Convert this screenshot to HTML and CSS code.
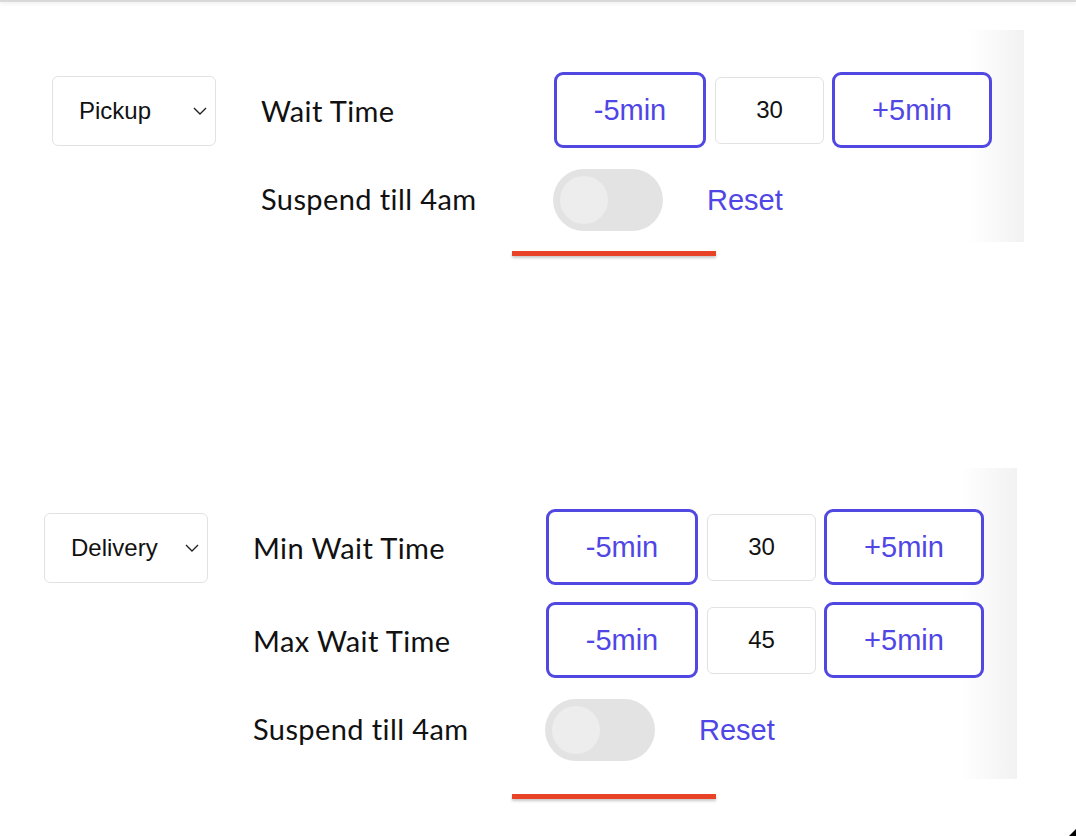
FILE: index.html
```html
<!DOCTYPE html>
<html lang="en">
<head>
<meta charset="utf-8">
<title>Wait Time Settings</title>
<link rel="stylesheet" href="styles.css">
</head>
<body>
<div class="topbar"></div>

<section class="panel panel-pickup">
  <div class="select">
    <span class="select-text">Pickup</span>
    <svg class="chev" width="14" height="8" viewBox="0 0 14 8"><polyline points="1,1 7,7 13,1" fill="none" stroke="#222" stroke-width="1.4"/></svg>
  </div>
  <div class="rows">
    <div class="label">Wait Time</div>
    <div class="controls">
      <button class="step step-minus">-5min</button>
      <div class="value">30</div>
      <button class="step step-plus">+5min</button>
    </div>
    <div class="label label-toggle">Suspend till 4am</div>
    <div class="toggle-row">
      <span class="toggle"><span class="knob"></span></span>
      <a class="reset">Reset</a>
    </div>
  </div>
</section>
<div class="redline"></div>

<section class="panel panel-delivery">
  <div class="select">
    <span class="select-text">Delivery</span>
    <svg class="chev" width="14" height="8" viewBox="0 0 14 8"><polyline points="1,1 7,7 13,1" fill="none" stroke="#222" stroke-width="1.4"/></svg>
  </div>
  <div class="rows">
    <div class="label">Min Wait Time</div>
    <div class="controls">
      <button class="step step-minus">-5min</button>
      <div class="value">30</div>
      <button class="step step-plus">+5min</button>
    </div>
    <div class="label label-second">Max Wait Time</div>
    <div class="controls controls-second">
      <button class="step step-minus">-5min</button>
      <div class="value">45</div>
      <button class="step step-plus">+5min</button>
    </div>
    <div class="label label-toggle">Suspend till 4am</div>
    <div class="toggle-row">
      <span class="toggle"><span class="knob"></span></span>
      <a class="reset">Reset</a>
    </div>
  </div>
</section>
<div class="redline redline-bottom"></div>

<span class="corner"></span>
</body>
</html>
```

FILE: styles.css
```css
html, body {
  margin: 0;
  padding: 0;
  background: #ffffff;
}
body {
  position: relative;
  width: 1076px;
  height: 836px;
  overflow: hidden;
  font-family: "Liberation Sans", Arial, sans-serif;
}
.topbar {
  height: 2px;
  background: #d9d9d9;
  box-shadow: 0 1px 4px rgba(0, 0, 0, 0.12);
}
.panel {
  display: flex;
  align-items: flex-start;
  box-sizing: border-box;
  background: linear-gradient(to right, #ffffff 0, #ffffff calc(100% - 56px), #f2f2f2 100%);
}
.panel-pickup {
  margin-top: 28px;
  width: 1024px;
  height: 212px;
  padding: 42px 0 0 52px;
}
.panel-delivery {
  margin-top: 212px;
  width: 1017px;
  height: 311px;
  padding: 41px 0 0 44px;
}
.select {
  box-sizing: border-box;
  width: 164px;
  height: 70px;
  margin-top: 4px;
  border: 1.5px solid #e2e2e2;
  border-radius: 6px;
  background: #fff;
  display: flex;
  align-items: center;
  justify-content: space-between;
  padding: 0 8px 0 26px;
}
.select-text {
  font-size: 24px;
  color: #111;
}
.chev {
  display: block;
}
.rows {
  display: grid;
  grid-template-columns: 294px auto;
  align-items: center;
  margin-left: 44px;
}
.label {
  font-family: "Lato", "Noto Sans", sans-serif;
  font-size: 29px;
  color: #111;
  letter-spacing: 0.4px;
  margin-left: 1px;
}
.controls {
  display: flex;
  align-items: center;
}
.controls-second,
.label-second {
  margin-top: 17px;
}
.step {
  box-sizing: border-box;
  height: 76px;
  border: 3px solid #5048e0;
  border-radius: 9px;
  background: #fff;
  color: #4f46e5;
  font-family: "Liberation Sans", Arial, sans-serif;
  font-size: 29px;
  padding: 0;
}
.step-minus {
  width: 152px;
}
.step-plus {
  width: 160px;
}
.value {
  box-sizing: border-box;
  width: 109px;
  height: 67px;
  margin: 0 8px 0 9px;
  border: 1.5px solid #e2e2e2;
  border-radius: 6px;
  display: flex;
  align-items: center;
  justify-content: center;
  font-size: 24px;
  color: #111;
}
.label-toggle,
.toggle-row {
  margin-top: 21px;
}
.label-toggle {
  position: relative;
  top: -2px;
}
.toggle-row {
  display: flex;
  align-items: center;
  margin-left: -1px;
}
.toggle {
  box-sizing: border-box;
  width: 110px;
  height: 62px;
  border-radius: 31px;
  background: #e3e3e3;
  padding: 7px;
  display: flex;
}
.knob {
  width: 48px;
  height: 48px;
  border-radius: 50%;
  background: #ededed;
}
.reset {
  margin-left: 44px;
  font-size: 29px;
  color: #4f46e5;
}
.redline {
  width: 204px;
  height: 5px;
  margin: 9px 0 0 512px;
  background: #e84327;
  box-shadow: 0 2px 3px rgba(0, 0, 0, 0.22);
}
.redline-bottom {
  margin-top: 15px;
}
.corner {
  position: absolute;
  right: 0;
  bottom: 0;
  width: 0;
  height: 0;
  border-left: 7px solid transparent;
  border-bottom: 7px solid #000;
}
```
